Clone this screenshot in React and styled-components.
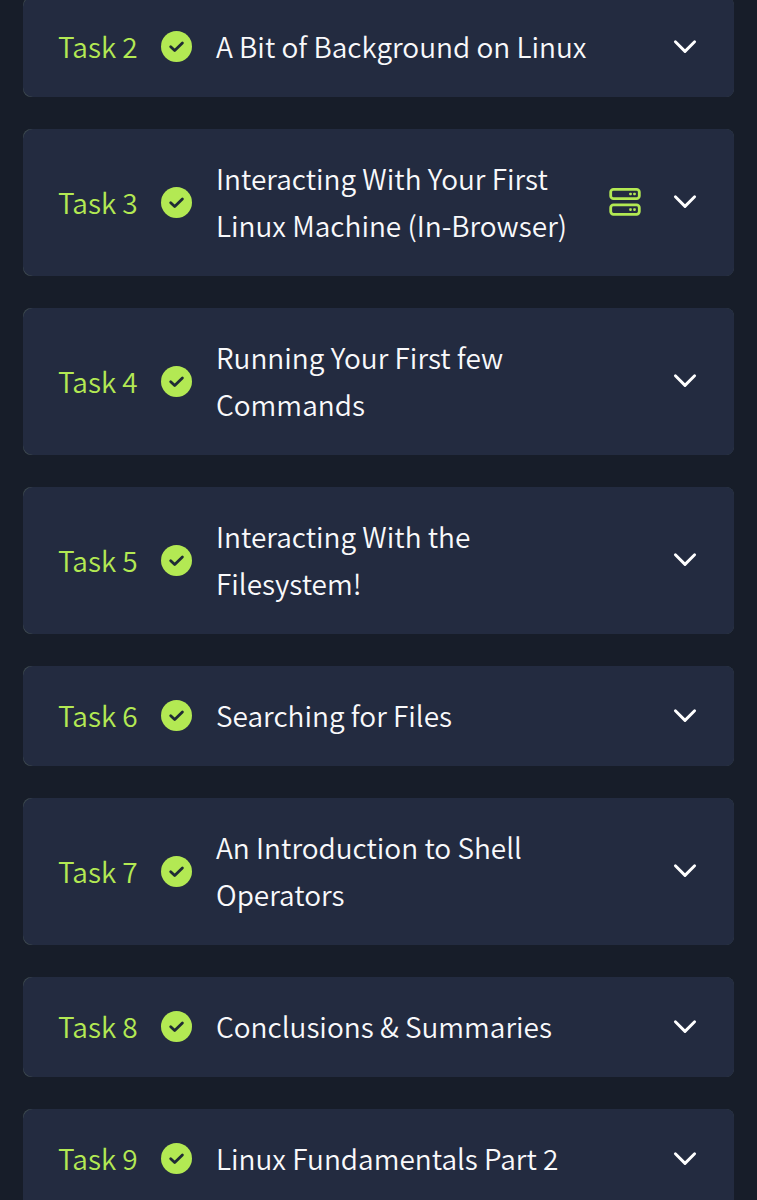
import React, { useState } from 'react';
import styled, { createGlobalStyle } from 'styled-components';

const GlobalStyle = createGlobalStyle`
  * {
    box-sizing: border-box;
  }

  body {
    margin: 0;
    background-color: #171d29;
    font-family: "Noto Sans CJK SC", "Noto Sans", sans-serif;
  }
`;

const Page = styled.main`
  height: 100vh;
  overflow: hidden;
  padding: 0 23px;
`;

const TaskList = styled.ul`
  display: flex;
  flex-direction: column;
  gap: 32px;
  margin: -3px 0 0;
  padding: 0;
  list-style: none;
`;

/* the lighter background only shows at the left corners */
const TaskItem = styled.li`
  border-radius: 8px;
  background-color: #3e4a50;
`;

const TaskButton = styled.button`
  display: flex;
  align-items: center;
  width: 100%;
  padding: 26px 37px 27px 35px;
  border: 0;
  border-radius: 10px 8px 8px 10px;
  background-color: #232b40;
  color: #f9f9fb;
  font-family: inherit;
  font-size: 28px;
  font-weight: 350;
  line-height: 47px;
  text-align: left;
  cursor: pointer;
`;

const TaskNumber = styled.span`
  flex: none;
  width: 103px;
  color: #b3e953;
  white-space: nowrap;
`;

const TaskTitle = styled.span`
  flex: 1;
  min-width: 0;
  margin-left: 24px;
`;

const MachineSlot = styled.span`
  display: flex;
  flex: none;
  width: 32px;
  margin: 0 32px 0 16px;
`;

const Icon = styled.svg`
  display: block;
  flex: none;
`;

const CheckIcon = () => (
  <Icon width="31" height="31" viewBox="0 0 31 31" role="img" aria-label="Completed">
    <circle cx="15.5" cy="15.5" r="15.5" fill="#b3e953" />
    <path
      d="M9.7 15.8 13.7 19.6 21.4 12"
      fill="none"
      stroke="#1f2b35"
      strokeWidth="2.8"
      strokeLinecap="round"
      strokeLinejoin="round"
    />
  </Icon>
);

const ServerIcon = () => (
  <Icon width="32" height="30" viewBox="0 0 32 30" role="img" aria-label="Machine">
    <g fill="none" stroke="#b3e953" strokeWidth="2.8">
      <rect x="1.7" y="2.3" width="28.6" height="9.4" rx="2.8" />
      <rect x="1.7" y="17.9" width="28.6" height="9.4" rx="2.8" />
    </g>
    <g fill="#b3e953">
      <rect x="20.2" y="5.7" width="2.6" height="2.6" rx="0.8" />
      <rect x="24.2" y="5.7" width="2.6" height="2.6" rx="0.8" />
      <rect x="20.2" y="21.3" width="2.6" height="2.6" rx="0.8" />
      <rect x="24.2" y="21.3" width="2.6" height="2.6" rx="0.8" />
    </g>
  </Icon>
);

const ChevronIcon = () => (
  <Icon width="24" height="16" viewBox="0 0 24 16" aria-hidden="true">
    <path
      d="M2.4 2.8 12 12.4 21.6 2.8"
      fill="none"
      stroke="#ffffff"
      strokeWidth="2.9"
      strokeLinecap="round"
      strokeLinejoin="round"
    />
  </Icon>
);

const tasks = [
  { id: 2, title: 'A Bit of Background on Linux' },
  { id: 3, title: 'Interacting With Your First Linux Machine (In-Browser)', machine: true },
  { id: 4, title: 'Running Your First few Commands' },
  { id: 5, title: 'Interacting With the Filesystem!' },
  { id: 6, title: 'Searching for Files' },
  { id: 7, title: 'An Introduction to Shell Operators' },
  { id: 8, title: 'Conclusions & Summaries' },
  { id: 9, title: 'Linux Fundamentals Part 2' },
];

const App = () => {
  const [openTask, setOpenTask] = useState(null);

  const toggle = id => setOpenTask(openTask === id ? null : id);

  return (
    <Page>
      <GlobalStyle />
      <TaskList>
        {tasks.map(({ id, title, machine }) =>
          <TaskItem key={id}>
            <TaskButton
              type="button"
              aria-expanded={openTask === id}
              onClick={() => toggle(id)}>
              <TaskNumber>Task {id}</TaskNumber>
              <CheckIcon />
              <TaskTitle>{title}</TaskTitle>
              <MachineSlot>{machine && <ServerIcon />}</MachineSlot>
              <ChevronIcon />
            </TaskButton>
          </TaskItem>)}
      </TaskList>
    </Page>
  );
};

export default App;
